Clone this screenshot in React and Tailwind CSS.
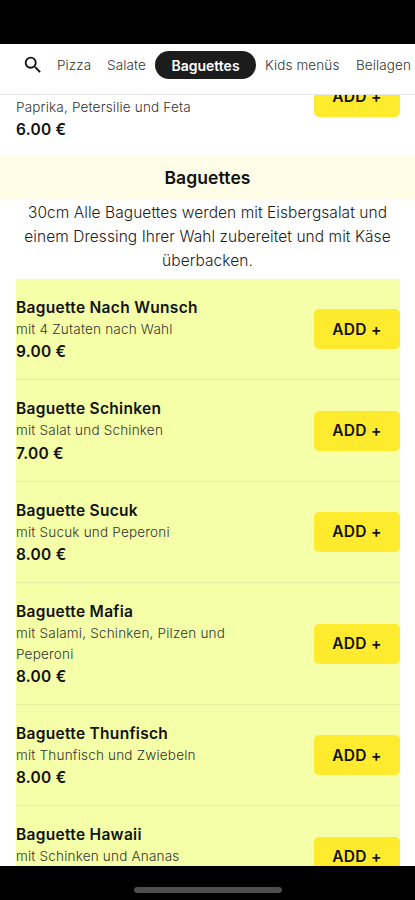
import { MdSearch } from 'react-icons/md';

const categories = [
  { name: 'Pizza', className: 'ml-[13px] w-[36px]' },
  { name: 'Salate', className: 'ml-[14px] w-[41px]' },
  { name: 'Baguettes', active: true },
  { name: 'Kids menüs', className: 'ml-[9px] w-[76px]' },
  { name: 'Beilagen', className: 'ml-[15px] w-[56px]' },
];

const baguettes = [
  { name: 'Baguette Nach Wunsch', text: 'mit 4 Zutaten nach Wahl', price: '9.00 €' },
  { name: 'Baguette Schinken', text: 'mit Salat und Schinken', price: '7.00 €' },
  { name: 'Baguette Sucuk', text: 'mit Sucuk und Peperoni', price: '8.00 €' },
  { name: 'Baguette Mafia', text: 'mit Salami, Schinken, Pilzen und Peperoni', price: '8.00 €' },
  { name: 'Baguette Thunfisch', text: 'mit Thunfisch und Zwiebeln', price: '8.00 €' },
  { name: 'Baguette Hawaii', text: 'mit Schinken und Ananas', price: '8.00 €' },
];

function AddButton() {
  return (
    <button className="h-10 w-[86px] shrink-0 rounded-[5px] bg-[#ffeb2d] text-[15.5px] font-semibold tracking-[0.3px] text-[#111]">
      ADD +
    </button>
  );
}

function MenuItem({ name, text, price }) {
  return (
    <li className="flex items-center justify-between border-b border-[#e6ee9f] py-4">
      <div className="w-[225px]">
        <h3 className="-mb-px pt-px text-[15.5px] leading-[24px] font-semibold tracking-[0.3px] whitespace-nowrap text-[#111]">{name}</h3>
        <p className="text-[13.5px] leading-[20.4px] font-light tracking-[0.2px] text-[#333]">{text}</p>
        <p className="-mb-px pt-px text-[15.5px] leading-[24px] font-semibold tracking-[0.25px] text-[#111]">{price}</p>
      </div>
      <AddButton />
    </li>
  );
}

export default function App() {
  return (
    <div className="flex h-[900px] w-[415px] flex-col overflow-hidden bg-white font-['Inter',sans-serif]">
      <div className="h-11 shrink-0 bg-black" />

      {/* Category bar */}
      <nav className="flex h-[51px] shrink-0 items-start border-b border-[#e5e5e5] bg-white pt-[7px] pl-[22px] whitespace-nowrap">
        <MdSearch size={22} className="mt-[3px] shrink-0 text-[#111]" />
        {categories.map(({ name, active, className }) =>
          active ? (
            <button key={name} className="ml-[7px] h-[28px] w-[101px] shrink-0 rounded-full bg-[#1c1c1c] text-[14px] font-semibold text-white">
              {name}
            </button>
          ) : (
            <button key={name} className={`h-[28px] shrink-0 text-left text-[13.5px] font-light tracking-[0.1px] text-[#333] ${className}`}>
              {name}
            </button>
          )
        )}
      </nav>

      <main className="min-h-0 flex-1 overflow-hidden">
        {/* End of the previous section, scrolled under the bar */}
        <div className="flex h-[60px] items-start justify-between overflow-hidden pr-[15px] pl-4">
          <div className="pt-[2px]">
            <p className="text-[13.5px] leading-[20.4px] font-light tracking-[0.18px] text-[#333]">Paprika, Petersilie und Feta</p>
            <p className="pt-px text-[15.5px] leading-[24px] font-semibold tracking-[0.25px] text-[#111]">6.00 €</p>
          </div>
          <div className="-mt-[18px]">
            <AddButton />
          </div>
        </div>

        <h2 className="bg-[#fffde7] text-center text-[17.5px] leading-[45px] font-semibold tracking-[0.1px] text-[#111]">Baguettes</h2>
        <p className="px-4 pt-px pb-[6px] text-center text-[15.5px] leading-[24px] font-light tracking-[0.06px] text-[#222]">
          30cm Alle Baguettes werden mit Eisbergsalat und einem Dressing Ihrer Wahl zubereitet und mit Käse überbacken.
        </p>

        <ul className="ml-4 w-[384px] bg-[#f5ffa8]">
          {baguettes.map((item) => (
            <MenuItem key={item.name} {...item} />
          ))}
        </ul>
      </main>

      <footer className="flex h-[34px] shrink-0 items-center justify-center bg-black pt-[13px]">
        <div className="h-[6px] w-[148px] rounded-full bg-[#4d4d4d]" />
      </footer>
    </div>
  );
}
